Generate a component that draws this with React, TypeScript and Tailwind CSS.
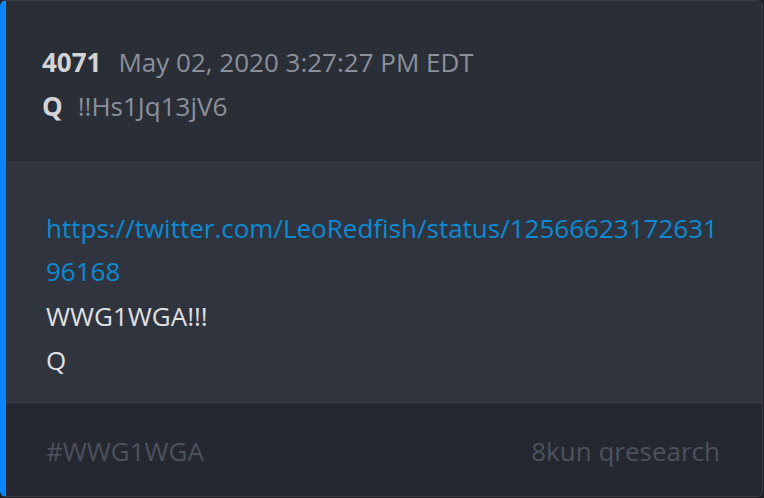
import React from 'react';

const post = {
  num: '4071',
  date: 'May 02, 2020 3:27:27 PM EDT',
  author: 'Q',
  trip: '!!Hs1Jq13jV6',
  link: 'https://twitter.com/LeoRedfish/status/1256662317263196168',
  lines: ['WWG1WGA!!!', 'Q'],
  tag: '#WWG1WGA',
  source: '8kun qresearch',
};

const App: React.FC = () => {
  return (
    <div className="w-[764px] h-[498px] bg-[#1c1e23] font-['Open_Sans',sans-serif] text-[26px]">
      <div className="w-[763px] h-[497px] flex flex-col rounded-md overflow-hidden border border-[#3a3e47] border-l-[6px] border-l-[#0a84ff]">
        <div className="bg-[#2a2e37] pl-[36px] pt-[39px] h-[162px] border-b border-[#3b404a] leading-[44px]">
          <div className="flex items-baseline gap-[17px]">
            <span className="font-bold text-[#d4d4d6]">{post.num}</span>
            <span className="text-[#8b909b]">{post.date}</span>
          </div>
          <div className="flex items-baseline gap-[15px]">
            <span className="font-bold text-[#d4d4d6]">{post.author}</span>
            <span className="text-[#8b909b]">{post.trip}</span>
          </div>
        </div>
        <div className="bg-[#2f343e] pl-[40px] pr-[40px] pt-[44px] h-[240px] border-b border-[#3b404a] leading-[43px]">
          <a className="block text-[#0b8bd3] break-all">{post.link}</a>
          <div className="leading-[44px] mt-px">
            {post.lines.map((l, i) => (
              <p key={i} className="text-[#e0e1e3]">{l}</p>
            ))}
          </div>
        </div>
        <div className="flex-1 bg-[#252830] pl-[40px] pr-[42px] pt-[27px] flex justify-between leading-[43px] text-[#4c525e]">
          <span>{post.tag}</span>
          <span>{post.source}</span>
        </div>
      </div>
    </div>
  );
};

export default App;
